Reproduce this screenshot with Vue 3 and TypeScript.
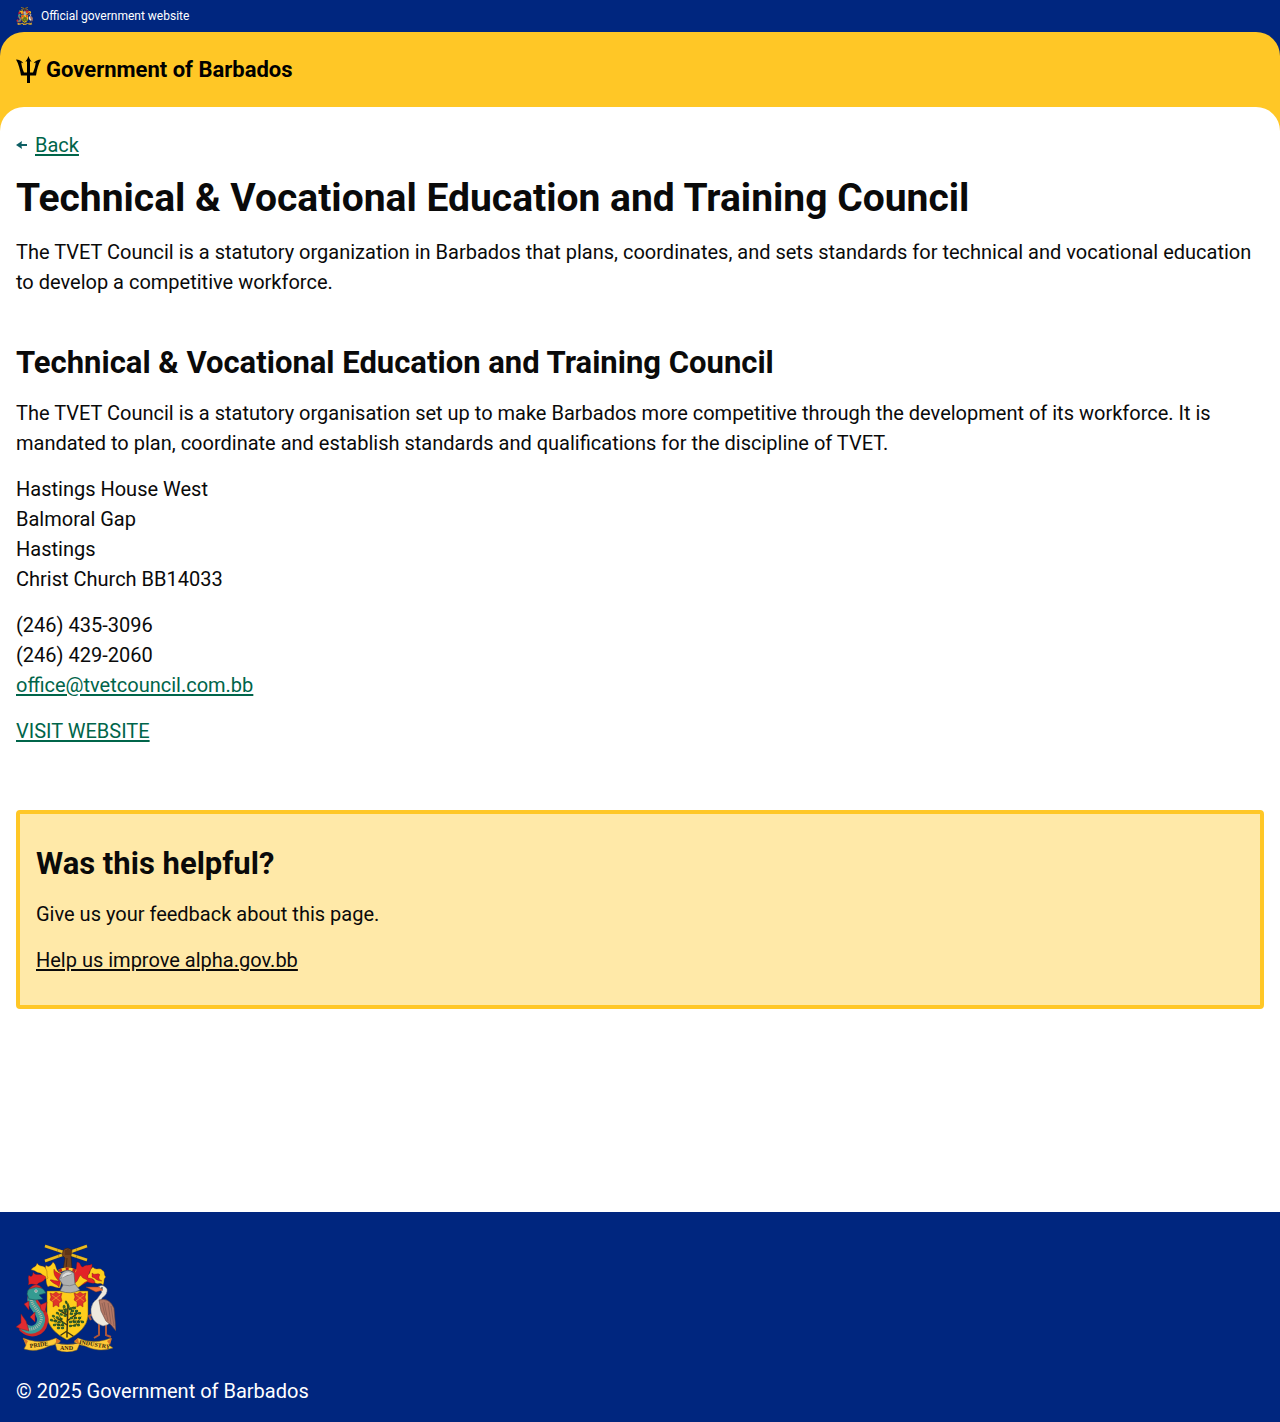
<script setup lang="ts">
const title: string = 'Technical & Vocational Education and Training Council'
const address: string[] = ['Hastings House West', 'Balmoral Gap', 'Hastings', 'Christ Church BB14033']
const phones: string[] = ['(246) 435-3096', '(246) 429-2060']
const email: string = 'office@tvetcouncil.com.bb'
</script>

<template>
  <div class="page">
    <div class="official">
      <svg class="official-arms" viewBox="0 0 100 108" aria-hidden="true"><use href="#arms" /></svg>
      <span>Official government website</span>
    </div>

    <header class="masthead">
      <div class="masthead-inner">
        <a class="brand" href="#">
          <svg class="trident" viewBox="0 0 25 27" aria-hidden="true">
            <path d="M12.500 0C13 2 14.300 4 15.600 5.700L14 5.300V16.600H17C18.400 13.200 19.600 9.500 19.700 6.500L17.600 7.300C19.500 4.700 22 3.800 25 3.600C22.300 8 21 13.600 20 19.600H14V27H11V19.600H5C4 13.600 2.700 8 0 3.600C3 3.800 5.500 4.700 7.400 7.300L5.300 6.500C5.400 9.500 6.600 13.200 8 16.600H11V5.300L9.400 5.700C10.700 4 12 2 12.500 0Z" />
          </svg>
          <span>Government of Barbados</span>
        </a>
      </div>
    </header>

    <div class="sheet-back">
      <main class="sheet">
        <nav class="back">
          <svg viewBox="0 0 11 10" aria-hidden="true"><path d="M0 5L6 1L5.500 4H11V6H5.500L6 9Z" /></svg>
          <a href="#">Back</a>
        </nav>

        <h1>{{ title }}</h1>
        <p>The TVET Council is a statutory organization in Barbados that plans, coordinates, and sets standards for technical and vocational education to develop a competitive workforce.</p>

        <section class="organisation">
          <h2>{{ title }}</h2>
          <p>The TVET Council is a statutory organisation set up to make Barbados more competitive through the development of its workforce. It is mandated to plan, coordinate and establish standards and qualifications for the discipline of TVET.</p>
          <address>
            <div v-for="line in address" :key="line">{{ line }}</div>
          </address>
          <div>
            <div v-for="phone in phones" :key="phone">{{ phone }}</div>
            <a :href="'mailto:' + email">{{ email }}</a>
          </div>
          <p><a href="#">VISIT WEBSITE</a></p>
        </section>

        <aside class="feedback">
          <h2>Was this helpful?</h2>
          <p>Give us your feedback about this page.</p>
          <p><a href="#">Help us improve alpha.gov.bb</a></p>
        </aside>
      </main>
    </div>

    <footer class="footer">
      <svg class="footer-arms" viewBox="0 0 100 108" role="img" aria-label="Coat of arms of Barbados">
        <g id="arms">
          <!-- Mantling -->
          <g stroke="#5d1715" stroke-width=".3">
            <path fill="#ffcf1b" d="M44 44C38 44 35 40 32 43C29 38 31 35 29 32C31 29 28 25 30 21C32 24 35 22 37 18C41 21 39 25 43 28L48 30Z" />
            <path fill="#ffcf1b" d="M31 35C27 34 28 31 24 29C20 29 20 26 15 26C17 22 20 24 21 19C24 24 28 20 30 25C32 28 30 31 32 34Z" />
            <path fill="#e22227" d="M30 33C27 40 23 37 21 41C18 41 17 39 12 41C14 37 11 35 13 31C15 34 17 32 17 28C20 33 24 28 30 33Z" />
            <path fill="#e22227" d="M46 31C42 28 40 29 38 25C37 31 40 34 43 37C38 37 36 35 34 36C37 40 41 40 43 43Z" />
            <path fill="#e22227" d="M57 28C61 28 60 22 61 18C65 18 64 23 67 23C70 20 73 22 76 20C77 25 72 28 73 32C76 33 77 37 81 38C76 41 74 38 71 38C68 41 63 41 59 44Z" />
            <path fill="#ffcf1b" d="M72 31C75 29 73 26 77 23C80 27 84 23 86 26C90 28 87 30 90 33C87 35 89 38 87 41C84 38 83 41 79 39C79 35 75 34 72 34Z" />
            <path fill="#ffcf1b" d="M58 39C62 39 62 33 65 31C66 35 69 34 72 37C67 38 66 42 61 44Z" />
            <path fill="#e22227" d="M76 29C79 32 82 28 84 31C82 33 83 36 86 37C80 37 80 34 76 33Z" />
          </g>
          <!-- Crossed sugar canes and raised arm -->
          <path d="M29 17L71 2M29 2L71 16" stroke="#684b13" stroke-width="3" />
          <path d="M29 17L71 2M29 2L71 16" stroke="#e9bb22" stroke-width="2.400" />
          <path d="M42 10L43 13M60 4L61 7M42 5L41 8M61 11L60 14" stroke="#785716" stroke-width=".4" />
          <path fill="#72421f" stroke="#321b0d" stroke-width=".5" d="M47 7Q48 4 52 4L56 6L55 12L56 26H47L49 14L46 11Z" />
          <path fill="none" stroke="#341a0c" stroke-width=".6" d="M50 6V11M52 5V11M54 6V11M51 14L50 25" />
          <path stroke="#ffc928" stroke-width="3" d="M43 27Q51 23 60 27" fill="none" />
          <path stroke="#b91e20" stroke-width="3" stroke-dasharray="3 4" d="M43 27Q51 23 60 27" fill="none" />
          <!-- Shield -->
          <path fill="#ffcd1b" stroke="#6e5710" stroke-width=".5" d="M31 47H72V72Q71 86 51 96Q32 86 31 72Z" />
          <g fill="#e0352a" stroke="#8c1c18" stroke-width=".4">
            <path d="M34 49L37 50L40 48L43 50L46 49L45 53L46 57L43 59V63L40 61L37 63V58L34 56L35 53Z" />
            <path d="M58 49L61 50L64 48L67 50L70 49L69 53L70 57L67 59V63L64 61L61 63V58L58 56L59 53Z" />
          </g>
          <path d="M36 51L44 57M44 51L36 57M60 51L68 57M68 51L60 57" stroke="#f2a026" stroke-width=".8" />
          <g fill="none" stroke="#29441c" stroke-linecap="round">
            <path stroke="#3d3516" stroke-width="1.500" d="M52 60L51 89M51 81L41 74M51 77L62 69M51 71L43 66M51 87L45 91M51 88L57 92M51 88V93" />
            <path stroke="#35632a" stroke-width="2.400" stroke-dasharray="1 3" d="M50 58L54 65L60 64M48 62L51 68L42 66M41 69L50 72M55 70L66 69M37 72L48 76M55 74L67 74M35 76L47 79M54 78L67 78M38 81L47 81M54 82L64 81M42 84L48 84M56 67L63 67" />
            <path stroke-width=".8" d="M50 57L53 65M47 63L50 69M57 63L54 70M42 69L47 79M61 67L57 78M38 74L44 82M65 73L60 80M37 77L46 75M66 77L56 77M44 67L50 65M53 64L60 63M40 80L48 82M55 82L63 80" />
          </g>
          <!-- Helmet -->
          <path fill="#aeb0b0" stroke="#555" stroke-width=".6" d="M45 30Q51 23 58 29L59 40L64 46Q55 51 44 47L47 41L43 35Z" />
          <path fill="none" stroke="#777" stroke-width=".7" d="M43 35L50 32L56 30M47 41Q54 43 60 40" />
          <path fill="#dedede" d="M47 31Q52 26 56 30L51 31L46 34Z" />
          <!-- Dolphin -->
          <path fill="none" stroke="#ce2829" stroke-width="10" stroke-linecap="round" d="M18 50C11 60 31 68 27 78C25 88 15 90 8 84" />
          <path fill="none" stroke="#3b9b98" stroke-width="8" stroke-linecap="round" d="M18 49C9 60 27 67 25 77C23 86 14 88 8 83" />
          <path fill="none" stroke="#b0b7a6" stroke-width="3" stroke-dasharray="1 1" d="M16 52C12 61 28 68 25 77C22 84 16 86 11 85" />
          <path fill="#349b91" stroke="#18535a" stroke-width=".6" d="M11 50Q12 42 20 42Q27 43 30 49L23 51L27 55L20 56L13 55Z" />
          <path fill="#e22b30" stroke="#7d1e24" stroke-width=".5" d="M13 45Q20 37 26 44L20 43ZM8 60L13 57L13 66ZM24 61L31 58L29 68L25 66ZM14 73L19 68L19 78ZM0 83L5 79L5 70L10 77L13 87L5 85Z" />
          <circle cx="20" cy="47" r="1.500" fill="#fff" /><circle cx="20" cy="47" r=".7" />
          <!-- Pelican -->
          <path d="M83 79L83 91L78 94M90 79L90 91L95 93M79 69L73 72L75 76" fill="none" stroke="#ae573c" stroke-width="2" />
          <path fill="#eee9df" stroke="#777" stroke-width=".5" d="M82 43Q87 39 91 45Q92 50 86 54Q84 58 89 59Q98 61 98 70Q98 80 87 82Q74 78 75 65Q76 58 81 55L86 48Z" />
          <path fill="#b47865" stroke="#5f4039" stroke-width=".6" d="M83 56Q93 53 98 64L100 87L95 81L90 77L85 67Z" />
          <path fill="none" stroke="#704d47" stroke-width=".5" d="M88 58L92 77M92 59L95 80M86 59L89 71M95 62L98 82" />
          <path fill="#ef713a" stroke="#8b3b23" stroke-width=".5" d="M70 43L83 43L87 46L80 48Z" />
          <circle cx="86" cy="44" r=".8" />
          <!-- Motto ribbon -->
          <g fill="#ffca37" stroke="#80611a" stroke-width=".5">
            <path d="M7 94L13 96Q27 100 40 94L44 98Q39 101 33 102Q20 109 8 105L10 101Z" />
            <path d="M95 94L89 96Q75 100 62 94L58 98Q63 101 69 102Q83 109 97 104L93 101Z" />
            <path d="M39 99Q51 102 64 99L61 106Q51 110 41 106Z" />
          </g>
          <path fill="#d97325" d="M7 94L12 97L10 101ZM96 94L91 97L94 101ZM40 94L45 97L40 100ZM62 94L58 97L63 100Z" />
          <g class="motto" fill="#35240e">
            <text x="14" y="104" transform="rotate(-8 14 104)">PRIDE</text>
            <text x="44" y="106">AND</text>
            <text x="63" y="100" transform="rotate(9 63 100)">INDUSTRY</text>
          </g>
        </g>
      </svg>
      <p>© 2025 Government of Barbados</p>
    </footer>
  </div>
</template>

<style>
body {
  margin: 0;
}
</style>

<style scoped>
.page {
  display: flex;
  flex-direction: column;
  min-height: 100vh;
  color: #0a0a0a;
  background: #fff;
  font-family: Roboto, "Liberation Sans", sans-serif;
  font-size: 20px;
  line-height: 30px;
}
h1,
h2,
p,
address {
  margin: 0;
  font-style: normal;
}
h1 {
  font-size: 39px;
  line-height: 45px;
}
h2 {
  font-size: 31px;
  line-height: 38px;
}
a {
  color: #00654a;
  text-decoration-thickness: 2px;
  text-underline-offset: 2px;
}
.official {
  display: flex;
  align-items: center;
  gap: 8px;
  height: 32px;
  padding: 0 16px;
  color: #fff;
  background: #00267f;
  font-size: 12px;
  line-height: 18px;
}
.official-arms {
  width: 17px;
  height: 18px;
}
.masthead {
  background: #00267f;
}
.masthead-inner {
  display: flex;
  padding: 24px 16px;
  background: #ffc726;
  border-radius: 24px 24px 0 0;
}
.brand {
  display: flex;
  align-items: center;
  gap: 5px;
  color: #000;
  font-size: 22px;
  font-weight: 700;
  line-height: 27px;
  text-decoration: none;
}
.trident {
  width: 25px;
  height: 27px;
}
.sheet-back {
  background: #ffc726;
}
.sheet {
  display: flex;
  flex-direction: column;
  gap: 16px;
  padding: 23px 16px 203px;
  background: #fff;
  border-radius: 24px 24px 0 0;
}
.back {
  display: flex;
  align-items: center;
  gap: 8px;
}
.back svg {
  width: 11px;
  height: 10px;
  fill: #0e5f64;
}
.organisation {
  display: flex;
  flex-direction: column;
  gap: 16px;
  margin-top: 31px;
}
.feedback {
  display: flex;
  flex-direction: column;
  gap: 16px;
  margin-top: 48px;
  padding: 31px 16px 30px;
  border: 4px solid #ffc726;
  border-radius: 4px;
  background: #ffe9a8;
}
.feedback a {
  color: #0a0a0a;
}
.footer {
  display: flex;
  flex: 1;
  flex-direction: column;
  gap: 24px;
  padding: 32px 16px 16px;
  color: #fff;
  background: #00267f;
}
.footer-arms {
  width: 100px;
  height: 108px;
}
.motto {
  font-family: "Liberation Serif", serif;
  font-size: 6px;
  font-weight: 700;
}
</style>
